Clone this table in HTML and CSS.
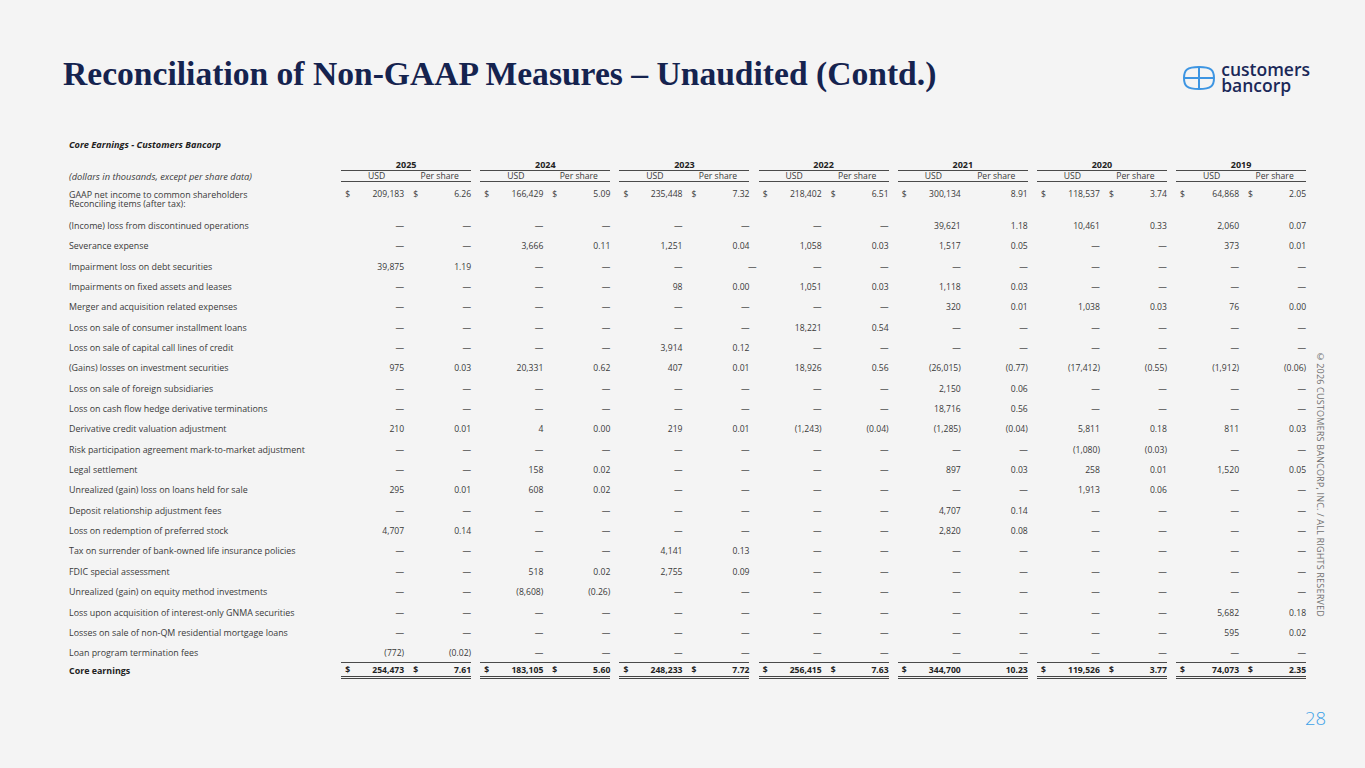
FILE: index.html
```html
<!DOCTYPE html>
<html lang="en">
<head>
<meta charset="utf-8">
<title>Reconciliation of Non-GAAP Measures</title>
<link rel="stylesheet" href="styles.css">
</head>
<body>
<div class="slide">
  <header class="head">
    <h1 class="title">Reconciliation of Non-GAAP Measures – Unaudited (Contd.)</h1>
    <div class="logo">
      <svg class="logo-mark" width="34" height="26" viewBox="0 0 34 26" fill="none" stroke="#3d95e2" stroke-width="2">
        <path d="M2 13 C2 5 5 2 17 2 C29 2 32 5 32 13 C32 21 29 24 17 24 C5 24 2 21 2 13 Z"/>
        <path d="M2 13 H32"/>
        <path d="M17 2 V24"/>
      </svg>
      <div class="logo-text"><div>customers</div><div>bancorp</div></div>
    </div>
  </header>

  <main class="body">
    <section class="tbl">
      <div class="cap">Core Earnings - Customers Bancorp</div>

      <div class="hdr">
        <div class="hlbl">(dollars in thousands, except per share data)</div>
        <div class="yr">2025</div><div class="yr">2024</div><div class="yr">2023</div><div class="yr">2022</div><div class="yr">2021</div><div class="yr">2020</div><div class="yr">2019</div>
        <div class="sub"><span>USD</span><span>Per share</span></div>
        <div class="sub"><span>USD</span><span>Per share</span></div>
        <div class="sub"><span>USD</span><span>Per share</span></div>
        <div class="sub"><span>USD</span><span>Per share</span></div>
        <div class="sub"><span>USD</span><span>Per share</span></div>
        <div class="sub"><span>USD</span><span>Per share</span></div>
        <div class="sub"><span>USD</span><span>Per share</span></div>
      </div>

      <div class="r first">
        <div class="l"><div>GAAP net income to common shareholders</div><div>Reconciling items (after tax):</div></div>
        <div class="g"><div class="c"><span class="d">$</span>209,183</div><div class="c"><span class="d">$</span>6.26</div></div>
        <div class="g"><div class="c"><span class="d">$</span>166,429</div><div class="c"><span class="d">$</span>5.09</div></div>
        <div class="g"><div class="c"><span class="d">$</span>235,448</div><div class="c"><span class="d">$</span>7.32</div></div>
        <div class="g"><div class="c"><span class="d">$</span>218,402</div><div class="c"><span class="d">$</span>6.51</div></div>
        <div class="g"><div class="c"><span class="d">$</span>300,134</div><div class="c">8.91</div></div>
        <div class="g"><div class="c"><span class="d">$</span>118,537</div><div class="c"><span class="d">$</span>3.74</div></div>
        <div class="g"><div class="c"><span class="d">$</span>64,868</div><div class="c"><span class="d">$</span>2.05</div></div>
      </div>

      <div class="r">
        <div class="l">(Income) loss from discontinued operations</div>
        <div class="g"><div class="c">—</div><div class="c">—</div></div>
        <div class="g"><div class="c">—</div><div class="c">—</div></div>
        <div class="g"><div class="c">—</div><div class="c">—</div></div>
        <div class="g"><div class="c">—</div><div class="c">—</div></div>
        <div class="g"><div class="c">39,621</div><div class="c">1.18</div></div>
        <div class="g"><div class="c">10,461</div><div class="c">0.33</div></div>
        <div class="g"><div class="c">2,060</div><div class="c">0.07</div></div>
      </div>

      <div class="r">
        <div class="l">Severance expense</div>
        <div class="g"><div class="c">—</div><div class="c">—</div></div>
        <div class="g"><div class="c">3,666</div><div class="c">0.11</div></div>
        <div class="g"><div class="c">1,251</div><div class="c">0.04</div></div>
        <div class="g"><div class="c">1,058</div><div class="c">0.03</div></div>
        <div class="g"><div class="c">1,517</div><div class="c">0.05</div></div>
        <div class="g"><div class="c">—</div><div class="c">—</div></div>
        <div class="g"><div class="c">373</div><div class="c">0.01</div></div>
      </div>

      <div class="r">
        <div class="l">Impairment loss on debt securities</div>
        <div class="g"><div class="c">39,875</div><div class="c">1.19</div></div>
        <div class="g"><div class="c">—</div><div class="c">—</div></div>
        <div class="g"><div class="c">—</div><div class="c"><span class="shift">—</span></div></div>
        <div class="g"><div class="c">—</div><div class="c">—</div></div>
        <div class="g"><div class="c">—</div><div class="c">—</div></div>
        <div class="g"><div class="c">—</div><div class="c">—</div></div>
        <div class="g"><div class="c">—</div><div class="c">—</div></div>
      </div>

      <div class="r">
        <div class="l">Impairments on fixed assets and leases</div>
        <div class="g"><div class="c">—</div><div class="c">—</div></div>
        <div class="g"><div class="c">—</div><div class="c">—</div></div>
        <div class="g"><div class="c">98</div><div class="c">0.00</div></div>
        <div class="g"><div class="c">1,051</div><div class="c">0.03</div></div>
        <div class="g"><div class="c">1,118</div><div class="c">0.03</div></div>
        <div class="g"><div class="c">—</div><div class="c">—</div></div>
        <div class="g"><div class="c">—</div><div class="c">—</div></div>
      </div>

      <div class="r">
        <div class="l">Merger and acquisition related expenses</div>
        <div class="g"><div class="c">—</div><div class="c">—</div></div>
        <div class="g"><div class="c">—</div><div class="c">—</div></div>
        <div class="g"><div class="c">—</div><div class="c">—</div></div>
        <div class="g"><div class="c">—</div><div class="c">—</div></div>
        <div class="g"><div class="c">320</div><div class="c">0.01</div></div>
        <div class="g"><div class="c">1,038</div><div class="c">0.03</div></div>
        <div class="g"><div class="c">76</div><div class="c">0.00</div></div>
      </div>

      <div class="r">
        <div class="l">Loss on sale of consumer installment loans</div>
        <div class="g"><div class="c">—</div><div class="c">—</div></div>
        <div class="g"><div class="c">—</div><div class="c">—</div></div>
        <div class="g"><div class="c">—</div><div class="c">—</div></div>
        <div class="g"><div class="c">18,221</div><div class="c">0.54</div></div>
        <div class="g"><div class="c">—</div><div class="c">—</div></div>
        <div class="g"><div class="c">—</div><div class="c">—</div></div>
        <div class="g"><div class="c">—</div><div class="c">—</div></div>
      </div>

      <div class="r">
        <div class="l">Loss on sale of capital call lines of credit</div>
        <div class="g"><div class="c">—</div><div class="c">—</div></div>
        <div class="g"><div class="c">—</div><div class="c">—</div></div>
        <div class="g"><div class="c">3,914</div><div class="c">0.12</div></div>
        <div class="g"><div class="c">—</div><div class="c">—</div></div>
        <div class="g"><div class="c">—</div><div class="c">—</div></div>
        <div class="g"><div class="c">—</div><div class="c">—</div></div>
        <div class="g"><div class="c">—</div><div class="c">—</div></div>
      </div>

      <div class="r">
        <div class="l">(Gains) losses on investment securities</div>
        <div class="g"><div class="c">975</div><div class="c">0.03</div></div>
        <div class="g"><div class="c">20,331</div><div class="c">0.62</div></div>
        <div class="g"><div class="c">407</div><div class="c">0.01</div></div>
        <div class="g"><div class="c">18,926</div><div class="c">0.56</div></div>
        <div class="g"><div class="c">(26,015)</div><div class="c">(0.77)</div></div>
        <div class="g"><div class="c">(17,412)</div><div class="c">(0.55)</div></div>
        <div class="g"><div class="c">(1,912)</div><div class="c">(0.06)</div></div>
      </div>

      <div class="r">
        <div class="l">Loss on sale of foreign subsidiaries</div>
        <div class="g"><div class="c">—</div><div class="c">—</div></div>
        <div class="g"><div class="c">—</div><div class="c">—</div></div>
        <div class="g"><div class="c">—</div><div class="c">—</div></div>
        <div class="g"><div class="c">—</div><div class="c">—</div></div>
        <div class="g"><div class="c">2,150</div><div class="c">0.06</div></div>
        <div class="g"><div class="c">—</div><div class="c">—</div></div>
        <div class="g"><div class="c">—</div><div class="c">—</div></div>
      </div>

      <div class="r">
        <div class="l">Loss on cash flow hedge derivative terminations</div>
        <div class="g"><div class="c">—</div><div class="c">—</div></div>
        <div class="g"><div class="c">—</div><div class="c">—</div></div>
        <div class="g"><div class="c">—</div><div class="c">—</div></div>
        <div class="g"><div class="c">—</div><div class="c">—</div></div>
        <div class="g"><div class="c">18,716</div><div class="c">0.56</div></div>
        <div class="g"><div class="c">—</div><div class="c">—</div></div>
        <div class="g"><div class="c">—</div><div class="c">—</div></div>
      </div>

      <div class="r">
        <div class="l">Derivative credit valuation adjustment</div>
        <div class="g"><div class="c">210</div><div class="c">0.01</div></div>
        <div class="g"><div class="c">4</div><div class="c">0.00</div></div>
        <div class="g"><div class="c">219</div><div class="c">0.01</div></div>
        <div class="g"><div class="c">(1,243)</div><div class="c">(0.04)</div></div>
        <div class="g"><div class="c">(1,285)</div><div class="c">(0.04)</div></div>
        <div class="g"><div class="c">5,811</div><div class="c">0.18</div></div>
        <div class="g"><div class="c">811</div><div class="c">0.03</div></div>
      </div>

      <div class="r">
        <div class="l">Risk participation agreement mark-to-market adjustment</div>
        <div class="g"><div class="c">—</div><div class="c">—</div></div>
        <div class="g"><div class="c">—</div><div class="c">—</div></div>
        <div class="g"><div class="c">—</div><div class="c">—</div></div>
        <div class="g"><div class="c">—</div><div class="c">—</div></div>
        <div class="g"><div class="c">—</div><div class="c">—</div></div>
        <div class="g"><div class="c">(1,080)</div><div class="c">(0.03)</div></div>
        <div class="g"><div class="c">—</div><div class="c">—</div></div>
      </div>

      <div class="r">
        <div class="l">Legal settlement</div>
        <div class="g"><div class="c">—</div><div class="c">—</div></div>
        <div class="g"><div class="c">158</div><div class="c">0.02</div></div>
        <div class="g"><div class="c">—</div><div class="c">—</div></div>
        <div class="g"><div class="c">—</div><div class="c">—</div></div>
        <div class="g"><div class="c">897</div><div class="c">0.03</div></div>
        <div class="g"><div class="c">258</div><div class="c">0.01</div></div>
        <div class="g"><div class="c">1,520</div><div class="c">0.05</div></div>
      </div>

      <div class="r">
        <div class="l">Unrealized (gain) loss on loans held for sale</div>
        <div class="g"><div class="c">295</div><div class="c">0.01</div></div>
        <div class="g"><div class="c">608</div><div class="c">0.02</div></div>
        <div class="g"><div class="c">—</div><div class="c">—</div></div>
        <div class="g"><div class="c">—</div><div class="c">—</div></div>
        <div class="g"><div class="c">—</div><div class="c">—</div></div>
        <div class="g"><div class="c">1,913</div><div class="c">0.06</div></div>
        <div class="g"><div class="c">—</div><div class="c">—</div></div>
      </div>

      <div class="r">
        <div class="l">Deposit relationship adjustment fees</div>
        <div class="g"><div class="c">—</div><div class="c">—</div></div>
        <div class="g"><div class="c">—</div><div class="c">—</div></div>
        <div class="g"><div class="c">—</div><div class="c">—</div></div>
        <div class="g"><div class="c">—</div><div class="c">—</div></div>
        <div class="g"><div class="c">4,707</div><div class="c">0.14</div></div>
        <div class="g"><div class="c">—</div><div class="c">—</div></div>
        <div class="g"><div class="c">—</div><div class="c">—</div></div>
      </div>

      <div class="r">
        <div class="l">Loss on redemption of preferred stock</div>
        <div class="g"><div class="c">4,707</div><div class="c">0.14</div></div>
        <div class="g"><div class="c">—</div><div class="c">—</div></div>
        <div class="g"><div class="c">—</div><div class="c">—</div></div>
        <div class="g"><div class="c">—</div><div class="c">—</div></div>
        <div class="g"><div class="c">2,820</div><div class="c">0.08</div></div>
        <div class="g"><div class="c">—</div><div class="c">—</div></div>
        <div class="g"><div class="c">—</div><div class="c">—</div></div>
      </div>

      <div class="r">
        <div class="l">Tax on surrender of bank-owned life insurance policies</div>
        <div class="g"><div class="c">—</div><div class="c">—</div></div>
        <div class="g"><div class="c">—</div><div class="c">—</div></div>
        <div class="g"><div class="c">4,141</div><div class="c">0.13</div></div>
        <div class="g"><div class="c">—</div><div class="c">—</div></div>
        <div class="g"><div class="c">—</div><div class="c">—</div></div>
        <div class="g"><div class="c">—</div><div class="c">—</div></div>
        <div class="g"><div class="c">—</div><div class="c">—</div></div>
      </div>

      <div class="r">
        <div class="l">FDIC special assessment</div>
        <div class="g"><div class="c">—</div><div class="c">—</div></div>
        <div class="g"><div class="c">518</div><div class="c">0.02</div></div>
        <div class="g"><div class="c">2,755</div><div class="c">0.09</div></div>
        <div class="g"><div class="c">—</div><div class="c">—</div></div>
        <div class="g"><div class="c">—</div><div class="c">—</div></div>
        <div class="g"><div class="c">—</div><div class="c">—</div></div>
        <div class="g"><div class="c">—</div><div class="c">—</div></div>
      </div>

      <div class="r">
        <div class="l">Unrealized (gain) on equity method investments</div>
        <div class="g"><div class="c">—</div><div class="c">—</div></div>
        <div class="g"><div class="c">(8,608)</div><div class="c">(0.26)</div></div>
        <div class="g"><div class="c">—</div><div class="c">—</div></div>
        <div class="g"><div class="c">—</div><div class="c">—</div></div>
        <div class="g"><div class="c">—</div><div class="c">—</div></div>
        <div class="g"><div class="c">—</div><div class="c">—</div></div>
        <div class="g"><div class="c">—</div><div class="c">—</div></div>
      </div>

      <div class="r">
        <div class="l">Loss upon acquisition of interest-only GNMA securities</div>
        <div class="g"><div class="c">—</div><div class="c">—</div></div>
        <div class="g"><div class="c">—</div><div class="c">—</div></div>
        <div class="g"><div class="c">—</div><div class="c">—</div></div>
        <div class="g"><div class="c">—</div><div class="c">—</div></div>
        <div class="g"><div class="c">—</div><div class="c">—</div></div>
        <div class="g"><div class="c">—</div><div class="c">—</div></div>
        <div class="g"><div class="c">5,682</div><div class="c">0.18</div></div>
      </div>

      <div class="r">
        <div class="l">Losses on sale of non-QM residential mortgage loans</div>
        <div class="g"><div class="c">—</div><div class="c">—</div></div>
        <div class="g"><div class="c">—</div><div class="c">—</div></div>
        <div class="g"><div class="c">—</div><div class="c">—</div></div>
        <div class="g"><div class="c">—</div><div class="c">—</div></div>
        <div class="g"><div class="c">—</div><div class="c">—</div></div>
        <div class="g"><div class="c">—</div><div class="c">—</div></div>
        <div class="g"><div class="c">595</div><div class="c">0.02</div></div>
      </div>

      <div class="r under">
        <div class="l">Loan program termination fees</div>
        <div class="g"><div class="c">(772)</div><div class="c">(0.02)</div></div>
        <div class="g"><div class="c">—</div><div class="c">—</div></div>
        <div class="g"><div class="c">—</div><div class="c">—</div></div>
        <div class="g"><div class="c">—</div><div class="c">—</div></div>
        <div class="g"><div class="c">—</div><div class="c">—</div></div>
        <div class="g"><div class="c">—</div><div class="c">—</div></div>
        <div class="g"><div class="c">—</div><div class="c">—</div></div>
      </div>

      <div class="r total">
        <div class="l">Core earnings</div>
        <div class="g"><div class="c"><span class="d">$</span>254,473</div><div class="c"><span class="d">$</span>7.61</div></div>
        <div class="g"><div class="c"><span class="d">$</span>183,105</div><div class="c"><span class="d">$</span>5.60</div></div>
        <div class="g"><div class="c"><span class="d">$</span>248,233</div><div class="c"><span class="d">$</span>7.72</div></div>
        <div class="g"><div class="c"><span class="d">$</span>256,415</div><div class="c"><span class="d">$</span>7.63</div></div>
        <div class="g"><div class="c"><span class="d">$</span>344,700</div><div class="c">10.23</div></div>
        <div class="g"><div class="c"><span class="d">$</span>119,526</div><div class="c"><span class="d">$</span>3.77</div></div>
        <div class="g"><div class="c"><span class="d">$</span>74,073</div><div class="c"><span class="d">$</span>2.35</div></div>
      </div>
    </section>

    <aside class="side">
      <div class="copy">©2026 CUSTOMERS BANCORP, INC. / ALL RIGHTS RESERVED</div>
    </aside>
  </main>

  <footer class="foot">28</footer>
</div>
</body>
</html>
```

FILE: styles.css
```css
html, body {
  margin: 0;
  padding: 0;
  background: #f4f4f4;
}

.slide {
  width: 1365px;
  height: 768px;
  box-sizing: border-box;
  padding-left: 63px;
  display: flex;
  flex-direction: column;
  font-family: "Open Sans", "DejaVu Sans", sans-serif;
  color: #3a3a3a;
  overflow: hidden;
}

/* ---------- header ---------- */
.head {
  display: flex;
  justify-content: space-between;
  align-items: flex-start;
  padding-top: 54px;
  padding-right: 55px;
  height: 40px;
}

.title {
  margin: 0;
  font-family: "Liberation Serif", "Times New Roman", serif;
  font-weight: 700;
  font-size: 33.6px;
  line-height: 40px;
  letter-spacing: 0;
  color: #15234f;
}

.logo {
  display: flex;
  align-items: center;
  gap: 5px;
  margin-top: 7px;
}

.logo-mark {
  display: block;
  margin-top: 1px;
}

.logo-text {
  font-family: "Open Sans", sans-serif;
  font-weight: 600;
  font-size: 17.5px;
  line-height: 16.5px;
  color: #1a2858;
}

.logo-text div {
  height: 16px;
}

/* ---------- body ---------- */
.body {
  display: flex;
  margin-top: 46px;
}

.tbl {
  margin-left: 6px;
  width: 1237px;
  flex: none;
  font-size: 8.6px;
}

.cap {
  font-weight: 700;
  font-style: italic;
  font-size: 9.2px;
  line-height: 10px;
  height: 10px;
  margin-bottom: 10px;
  color: #222;
}

.hdr {
  display: grid;
  grid-template-columns: 263px repeat(7, 130px);
  grid-template-rows: 11px 11px;
  column-gap: 9.17px;
}

.hlbl {
  grid-row: 1 / 3;
  grid-column: 1;
  align-self: end;
  font-style: italic;
  font-size: 9.3px;
  line-height: 10px;
}

.yr {
  grid-row: 1;
  text-align: center;
  font-weight: 700;
  font-size: 9px;
  line-height: 10px;
  border-bottom: 1px solid #4a4a4a;
  color: #222;
}

.sub {
  grid-row: 2;
  display: grid;
  grid-template-columns: 65px 65px;
  line-height: 10px;
  border-bottom: 1px solid #4a4a4a;
}

.sub span {
  text-align: center;
}

.sub span:first-child {
  padding-left: 6px;
}

.sub span:last-child {
  padding-left: 2px;
}

.r {
  display: grid;
  grid-template-columns: 263px repeat(7, 130px);
  column-gap: 9.17px;
  height: 20.35px;
  align-items: center;
  line-height: 10px;
}

.l {
  font-size: 8.9px;
  white-space: nowrap;
}

.r.first {
  height: 33.8px;
  align-items: start;
  padding-top: 7.5px;
  box-sizing: border-box;
  line-height: 9.5px;
}

.r.first .l div {
  height: 9px;
}

.g {
  display: grid;
  grid-template-columns: 65px 65px;
  align-items: center;
  height: 100%;
  box-sizing: border-box;
}

.r.first .g {
  align-items: start;
}

.c {
  display: flex;
  justify-content: flex-end;
  white-space: nowrap;
}

.c:first-child {
  padding-right: 2px;
}

.d {
  margin-right: auto;
  padding-left: 4px;
}

.c + .c .d {
  padding-left: 7px;
}

.shift {
  margin-right: -7px;
}

.r.under .g {
  border-bottom: 1px solid #4a4a4a;
}

.r.total {
  height: 16px;
  font-weight: 700;
  color: #222;
}

.r.total .g {
  border-bottom: 3px double #444;
  padding-top: 1px;
}

/* ---------- side ---------- */
.side {
  flex: 1;
  padding-left: 9px;
}

.copy {
  margin-top: 210px;
  writing-mode: vertical-rl;
  font-size: 9px;
  letter-spacing: 0.2px;
  color: #6f6f6f;
  line-height: 10px;
  white-space: nowrap;
}

/* ---------- footer ---------- */
.foot {
  margin-top: auto;
  padding-right: 39px;
  padding-bottom: 39px;
  text-align: right;
  font-size: 18.5px;
  font-weight: 300;
  line-height: 22px;
  color: #3ea2e8;
}
```
